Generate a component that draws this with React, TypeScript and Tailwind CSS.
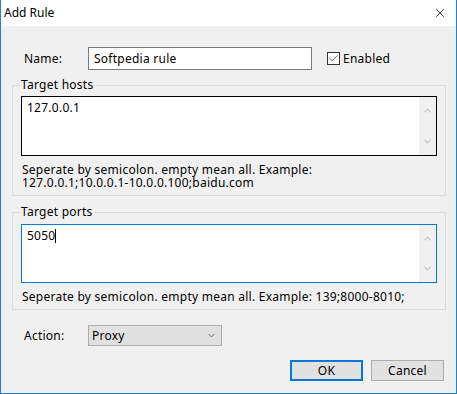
import { Check, X, ChevronDown, ChevronUp } from "lucide-react";

const font = "font-['Noto_Sans',sans-serif]";

const ScrollBar = () => (
  <div className="w-[17px] h-full bg-[#f0f0f0] flex flex-col items-center justify-between py-[8px]">
    <ChevronUp className="w-[11px] h-[11px] text-[#c2c2c2]" strokeWidth={2.5} />
    <ChevronDown className="w-[11px] h-[11px] text-[#c2c2c2]" strokeWidth={2.5} />
  </div>
);

export default function App() {
  return (
    <div className={`w-[457px] h-[394px] flex flex-col border-x border-b border-[#1883d7] text-[12px] tracking-[0.25px] text-black ${font}`}>
      {/* title bar */}
      <div className="h-[26px] bg-white flex items-center justify-between pl-[3px] pr-[9px] shrink-0">
        <span className="leading-4 tracking-normal">Add Rule</span>
        <X className="w-[14px] h-[14px] text-black" strokeWidth={1.3} />
      </div>

      <div className="flex-1 bg-[#f0f0f0] flex flex-col">
        {/* name row */}
        <div className="mt-[21px] h-[23px] flex items-center">
          <span className="w-[87px] pl-[23px] shrink-0">Name:</span>
          <div className="w-[224px] h-[23px] bg-white border border-[#7a7a7a] flex items-center pl-[5px]">
            Softpedia rule
          </div>
          <label className="ml-[15px] flex items-center gap-[3px]">
            <span className="w-[13px] h-[13px] bg-white border border-[#333] flex items-center justify-center">
              <Check className="w-[11px] h-[11px] text-[#333]" strokeWidth={1.6} />
            </span>
            Enabled
          </label>
        </div>

        {/* target hosts */}
        <fieldset className="mt-[7px] ml-[11px] w-[434px] border border-[#dcdcdc] pl-[8px] pr-[8px] pt-[3px] pb-[6px]">
          <legend className="px-[1px] leading-4 ml-[-1px]">Target hosts</legend>
          <div className="w-[416px] h-[60px] bg-white border border-black flex">
            <div className="flex-1 pl-[5px] pt-[3px] leading-4">127.0.0.1</div>
            <ScrollBar />
          </div>
          <div className="mt-[7px] leading-[13px] pl-[1px]">
            <p>Seperate by semicolon. empty mean all. Example:</p>
            <p>127.0.0.1;10.0.0.1-10.0.0.100;baidu.com</p>
          </div>
        </fieldset>

        {/* target ports */}
        <fieldset className="mt-[8px] ml-[11px] w-[434px] border border-[#dcdcdc] pl-[8px] pr-[8px] pt-[4px] pb-[6px]">
          <legend className="px-[1px] leading-4 ml-[-1px]">Target ports</legend>
          <div className="w-[416px] h-[59px] bg-white border border-[#0078d7] flex">
            <div className="flex-1 pl-[5px] pt-[3px] leading-4 flex items-start">
              <span>5050</span>
              <span className="w-[1px] h-[14px] bg-black mt-[1px]" />
            </div>
            <ScrollBar />
          </div>
          <div className="mt-[7px] leading-[13px] pl-[1px]">
            Seperate by semicolon. empty mean all. Example: 139;8000-8010;
          </div>
        </fieldset>

        {/* action row */}
        <div className="mt-[15px] h-[21px] flex items-center">
          <span className="w-[87px] pl-[23px] shrink-0">Action:</span>
          <div className="w-[134px] h-[21px] bg-[#e1e1e1] border border-[#adadad] flex items-center justify-between pl-[3px] pr-[4px]">
            <span>Proxy</span>
            <ChevronDown className="w-[11px] h-[11px] text-[#444]" strokeWidth={1.6} />
          </div>
        </div>

        {/* buttons */}
        <div className="mt-[14px] flex justify-end gap-[8px] pr-[12px]">
          <button className="w-[73px] h-[21px] bg-[#e1e1e1] border-2 border-[#0078d7] flex items-center justify-center leading-4">
            OK
          </button>
          <button className="w-[73px] h-[21px] bg-[#e1e1e1] border border-[#adadad] flex items-center justify-center leading-4">
            Cancel
          </button>
        </div>
      </div>
    </div>
  );
}
